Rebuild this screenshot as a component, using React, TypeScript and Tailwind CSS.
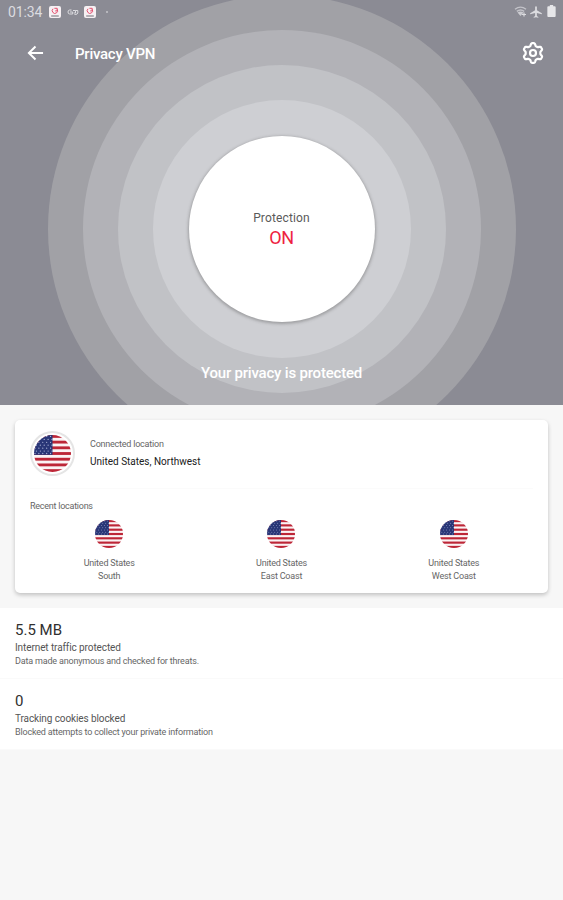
import { ReactNode, useId } from 'react';
import { MdAirplanemodeActive } from 'react-icons/md';

const recentLocations = [
    { country: 'United States', region: 'South' },
    { country: 'United States', region: 'East Coast' },
    { country: 'United States', region: 'West Coast' },
];

const stats = [
    {
        value: '5.5 MB',
        title: 'Internet traffic protected',
        description: 'Data made anonymous and checked for threats.',
    },
    {
        value: '0',
        title: 'Tracking cookies blocked',
        description: 'Blocked attempts to collect your private information',
    },
];

// Six rounded teeth, first one pointing up
const gearPoints = Array.from({ length: 120 }, (_, i) => {
    const angle = (i * Math.PI) / 60;
    const radius = 8.6 + 1.45 * Math.cos(angle * 6) - 0.25 * Math.cos(angle * 18);
    return `${(12 + radius * Math.sin(angle)).toFixed(2)},${(12 - radius * Math.cos(angle)).toFixed(2)}`;
}).join(' ');

function UsFlag({ className }: { className: string }) {
    const clip = useId();
    return (
        <svg viewBox="0 0 38 38" className={className}>
            <clipPath id={clip}>
                <circle cx="19" cy="19" r="19" />
            </clipPath>
            <g clipPath={`url(#${clip})`}>
                <rect width="38" height="38" fill="#fbf3f4" />
                {[0, 1, 2, 3, 4, 5, 6].map(i => (
                    <rect key={i} y={i * 5.85} width="38" height="2.92" fill="#bd2637" />
                ))}
                <rect width="19" height="20.4" fill="#293677" />
                {[1.5, 4.5, 7.5, 10.5, 13.5, 16.5, 19].map((y, row) =>
                    [1, 5, 9, 13, 17].map(x => (
                        <circle key={`${x}-${y}`} cx={x + (row % 2 ? 1.5 : 0)} cy={y} r="0.65" fill="#a9b1d6" />
                    ))
                )}
            </g>
        </svg>
    );
}

function NotificationIcon() {
    return (
        <svg viewBox="0 0 12 12" className="size-3 shrink-0">
            <rect width="12" height="12" rx="2" fill="#f6f0f3" />
            <path d="M4 2.8a2.7 2.7 0 1 0 4.3.6M5.4 2.3h2.8v2.6H6.2" fill="none" stroke="#e4506f" strokeWidth="1" />
            <path d="M2.2 10h7.6" stroke="#716e76" strokeWidth="1" />
        </svg>
    );
}

function StatusBar() {
    return (
        <div className="flex h-6 items-center pl-2 pr-[7px] text-[#dcdce0]">
            <span className="w-[34px] whitespace-nowrap text-[14px] leading-6 tracking-[-0.1px]">01:34</span>
            <div className="ml-[7px] flex items-center">
                <NotificationIcon />
                <svg viewBox="0 0 12 8" className="mx-[5.5px] h-2 w-3 shrink-0" fill="none" stroke="currentColor" strokeWidth="1">
                    <path d="M4.5 2H2.7Q1 2 1 4t1.7 2h3V4H3M6 2.5h2.5V5H6.8M8.5 2.5h2.3V5q0 1.5-3.3 1.5" />
                </svg>
                <NotificationIcon />
                <span className="ml-[10px] size-[1.5px] rounded-full bg-[#c4c4ca]" />
            </div>
            <div className="ml-auto flex items-center">
                <svg viewBox="0 0 14 12" className="h-3 w-[14px]" fill="none" stroke="currentColor">
                    <path d="M1 3.2q5.5-4.2 11 0M2.8 5.4q3.7-2.8 7.4 0" strokeWidth="1.4" opacity=".7" />
                    <path d="M3.5 6.4q3-1.8 6 0L6.5 10z" fill="currentColor" stroke="none" opacity=".8" />
                    <path d="M10 6.5v4M8 8.5h4" strokeWidth="1.2" />
                </svg>
                <MdAirplanemodeActive className="ml-px mr-px size-[14px]" />
                <svg viewBox="0 0 9 13" className="ml-[3px] h-3 w-[9px] -translate-y-px" fill="#e6e6e9">
                    <path d="M2.7 0h3.6v1.4H8q1 0 1 1V12q0 1-1 1H1q-1 0-1-1V2.4q0-1 1-1h1.7z" />
                </svg>
            </div>
        </div>
    );
}

function Ring({ className, children }: { className: string; children: ReactNode }) {
    return <div className={`flex shrink-0 items-center justify-center rounded-full ${className}`}>{children}</div>;
}

function ProtectionButton() {
    return (
        <Ring className="size-[468px] bg-[#a1a1a6]">
            <Ring className="size-[398px] bg-[#b2b2b7]">
                <Ring className="size-[328px] bg-[#c1c2c6]">
                    <Ring className="size-[258px] bg-[#cecfd3]">
                        <button className="flex size-[186px] flex-col items-center rounded-full bg-white pt-[74px] shadow-[0_1px_3px_1px_rgba(90,90,90,0.4)]">
                            <span className="text-[12px] leading-4 tracking-[0.15px] text-[#5a5a5a]">Protection</span>
                            <span className="text-[18px] leading-6 tracking-[-0.4px] text-[#ee2340]">ON</span>
                        </button>
                    </Ring>
                </Ring>
            </Ring>
        </Ring>
    );
}

export default function App() {
    return (
        <div className="h-[900px] w-[563px] overflow-hidden bg-[#f7f7f7] font-[Roboto,sans-serif] text-[#303030]">
            <div className="relative h-[405px] overflow-hidden bg-[#8b8b94] text-white">
                {/* rings spread behind the bars */}
                <div className="absolute left-[47.5px] top-[-5px]">
                    <ProtectionButton />
                </div>
                <div className="relative">
                    <StatusBar />
                    <header className="flex h-[58px] items-center pl-[27px] pr-[18px]">
                        <svg viewBox="0 0 18 16" className="h-4 w-[17px]" fill="none" stroke="currentColor" strokeWidth="2.1">
                            <path d="M17 8H2.5M9 1.2 2 8l7 6.8" />
                        </svg>
                        <h1 className="ml-[31px] pt-[2px] text-[15px] font-medium leading-5 tracking-[-0.25px]">Privacy VPN</h1>
                        <svg viewBox="0 0 24 24" className="ml-auto size-6" fill="none" stroke="currentColor" strokeWidth="2.2">
                            <polygon points={gearPoints} strokeLinejoin="round" />
                            <circle cx="12" cy="12" r="3" />
                        </svg>
                    </header>
                </div>
                <p className="absolute inset-x-0 top-[363px] text-center text-[15px] font-medium leading-5 tracking-[-0.2px]">
                    Your privacy is protected
                </p>
            </div>

            <section className="mx-[15px] mt-[15px] h-[173px] rounded-[5px] bg-white px-[15px] pt-[11px] shadow-[0_2px_4px_rgba(0,0,0,0.22)]">
                <div className="flex items-center">
                    <div className="flex size-[45px] items-center justify-center rounded-full border-2 border-[#e5e5e5]">
                        <UsFlag className="size-[37px]" />
                    </div>
                    <div className="-mt-px ml-[15px]">
                        <p className="text-[9px] leading-[15px] tracking-[-0.22px] text-[#666]">Connected location</p>
                        <p className="mt-[2px] text-[10px] leading-[15px] text-[#202020]">United States, Northwest</p>
                    </div>
                </div>
                <div className="mt-3 h-px bg-[#fbfbfb]" />
                <h2 className="mt-[9px] text-[9px] leading-4 tracking-[-0.25px] text-[#666]">Recent locations</h2>
                <ul className="-mx-[7px] mt-[6px] grid grid-cols-3">
                    {recentLocations.map(location => (
                        <li key={location.region} className="flex flex-col items-center text-[9px] leading-[13px] tracking-[-0.2px] text-[#666]">
                            <UsFlag className="mb-[9px] size-7" />
                            <span>{location.country}</span>
                            <span>{location.region}</span>
                        </li>
                    ))}
                </ul>
            </section>

            <section className="mt-[15px] h-[142px] bg-white">
                {stats.map(stat => (
                    <div key={stat.value} className="h-[71px] border-b border-[#fafafa] pl-[15px] pt-3">
                        <p className="text-[15px] leading-5">{stat.value}</p>
                        <p className="pt-px text-[10px] leading-[14px] tracking-[-0.1px] text-[#555]">{stat.title}</p>
                        <p className="text-[9px] leading-[13px] tracking-[-0.18px] text-[#666]">{stat.description}</p>
                    </div>
                ))}
            </section>
        </div>
    );
}
